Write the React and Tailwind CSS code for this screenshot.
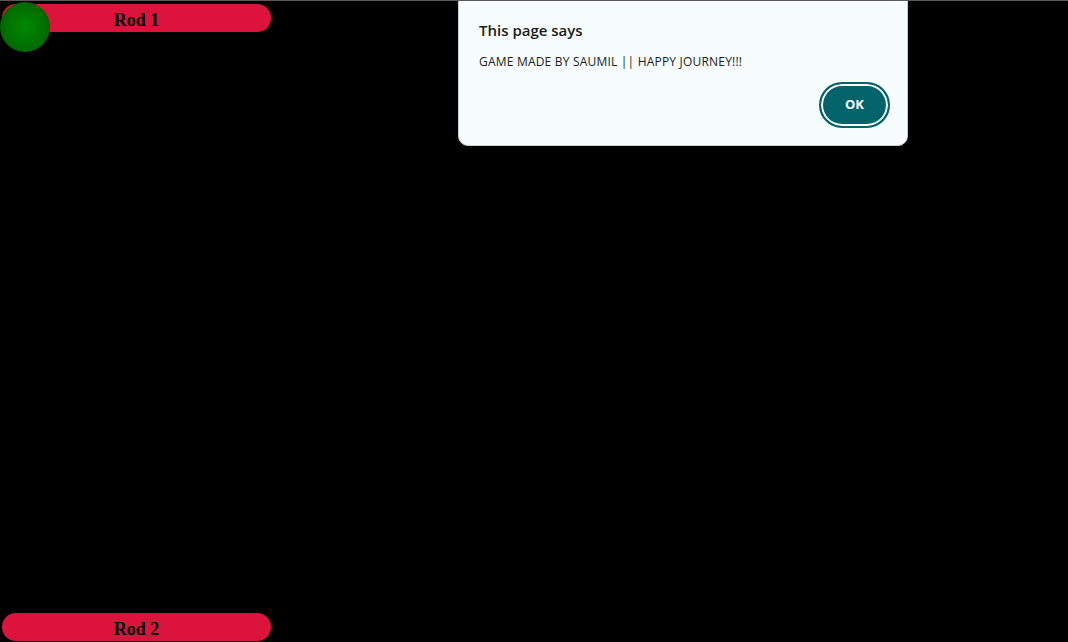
export default function App() {
  return (
    <div className="relative w-full h-[642px] bg-black overflow-hidden border-t border-[#5a5a5a]">
      <div className="flex flex-col justify-between h-full pt-[3px] pb-[1px] pl-[2px]">
        <div className="w-[269px] h-[28px] rounded-[14px] bg-[#dc143c] flex items-center justify-center font-bold text-[18px] text-black leading-none pt-[3px] [font-family:'Liberation_Serif',serif]">
          Rod 1
        </div>
        <div className="w-[269px] h-[28px] rounded-[14px] bg-[#dc143c] flex items-center justify-center font-bold text-[18px] text-black leading-none pt-[3px] [font-family:'Liberation_Serif',serif]">
          Rod 2
        </div>
      </div>

      {/* Ball */}
      <div className="absolute left-0 top-[1px] w-[50px] h-[50px] rounded-full bg-[radial-gradient(circle,#008a00_0%,#007000_55%,#005400_100%)]" />

      {/* Alert dialog */}
      <div className="absolute left-[458px] top-[-12px] w-[450px] h-[157px] rounded-[10px] bg-[#f7fdfd] border border-[#c8cccc] shadow-[0_2px_6px_rgba(0,0,0,0.3)] pt-[30px] pl-[20px] pr-[17px] [font-family:'Open_Sans','Noto_Sans',sans-serif]">
        <div className="text-[15px] font-semibold text-[#1b1b1b] leading-5">This page says</div>
        <div className="mt-[14px] text-[12px] tracking-[0.2px] text-[#1b1b1b] leading-4">GAME MADE BY SAUMIL || HAPPY JOURNEY!!!</div>
        <div className="flex justify-end mt-[12px]">
          <button className="w-[71px] h-[46px] rounded-full bg-[#03636b] text-white text-[13px] font-bold border-[2px] border-[#03636b] shadow-[inset_0_0_0_2px_#ffffff]">
            OK
          </button>
        </div>
      </div>
    </div>
  )
}
